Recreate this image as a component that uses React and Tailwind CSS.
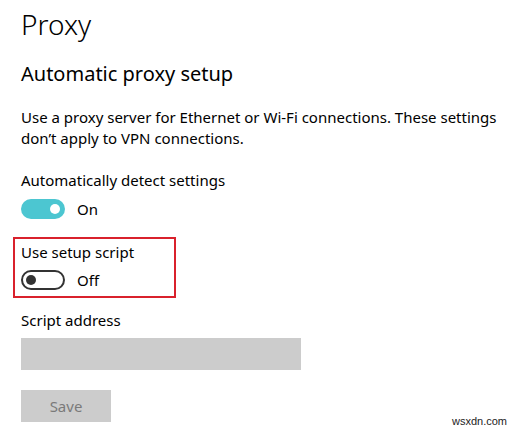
export default function App() {
  const font = { fontFamily: '"Noto Sans", "Open Sans", sans-serif' };
  return (
    <div className="w-[525px] h-[433px] bg-white relative overflow-hidden text-black" style={font}>
      <div className="pl-[21px] pt-[6px] flex flex-col items-start">
        <div className="text-[28px] font-light leading-[36px] text-[#000]">Proxy</div>
        <div className="mt-[19px] text-[20px] leading-[26px] font-normal">Automatic proxy setup</div>
        <div className="mt-[20px] text-[15px] leading-[21px] w-[495px]">
          Use a proxy server for Ethernet or Wi-Fi connections. These settings don’t apply to VPN connections.
        </div>
        <div className="mt-[21px] text-[15px] leading-[21px]">Automatically detect settings</div>
        <div className="mt-[8px] flex items-center gap-[12px]">
          <div className="w-[44px] h-[20px] rounded-full bg-[#4cc6d1] flex items-center justify-end pr-[5px]">
            <div className="w-[10px] h-[10px] rounded-full bg-white" />
          </div>
          <span className="text-[15px] leading-[20px]">On</span>
        </div>
        <div className="mt-[18px] -ml-[8px] border-2 border-[#d9212c] pl-[6px] pr-[8px] pt-[3px] pb-[6px] w-[163px]">
          <div className="text-[15px] leading-[21px]">Use setup script</div>
          <div className="mt-[7px] flex items-center gap-[12px]">
            <div className="w-[44px] h-[20px] rounded-full border-2 border-[#333] flex items-center pl-[3px]">
              <div className="w-[10px] h-[10px] rounded-full bg-[#333]" />
            </div>
            <span className="text-[15px] leading-[20px]">Off</span>
          </div>
        </div>
        <div className="mt-[12px] text-[15px] leading-[21px]">Script address</div>
        <div className="mt-[7px] w-[280px] h-[32px] bg-[#cccccc]" />
        <div className="mt-[20px] w-[90px] h-[32px] bg-[#cccccc] flex items-center justify-center text-[15px] text-[#7a7a7a]">Save</div>
      </div>
      <div className="absolute left-[452px] top-[413px] text-[11px] leading-[16px] text-[#222]" style={{ fontFamily: '"Liberation Sans", Arial, sans-serif' }}>wsxdn.com</div>
    </div>
  );
}
